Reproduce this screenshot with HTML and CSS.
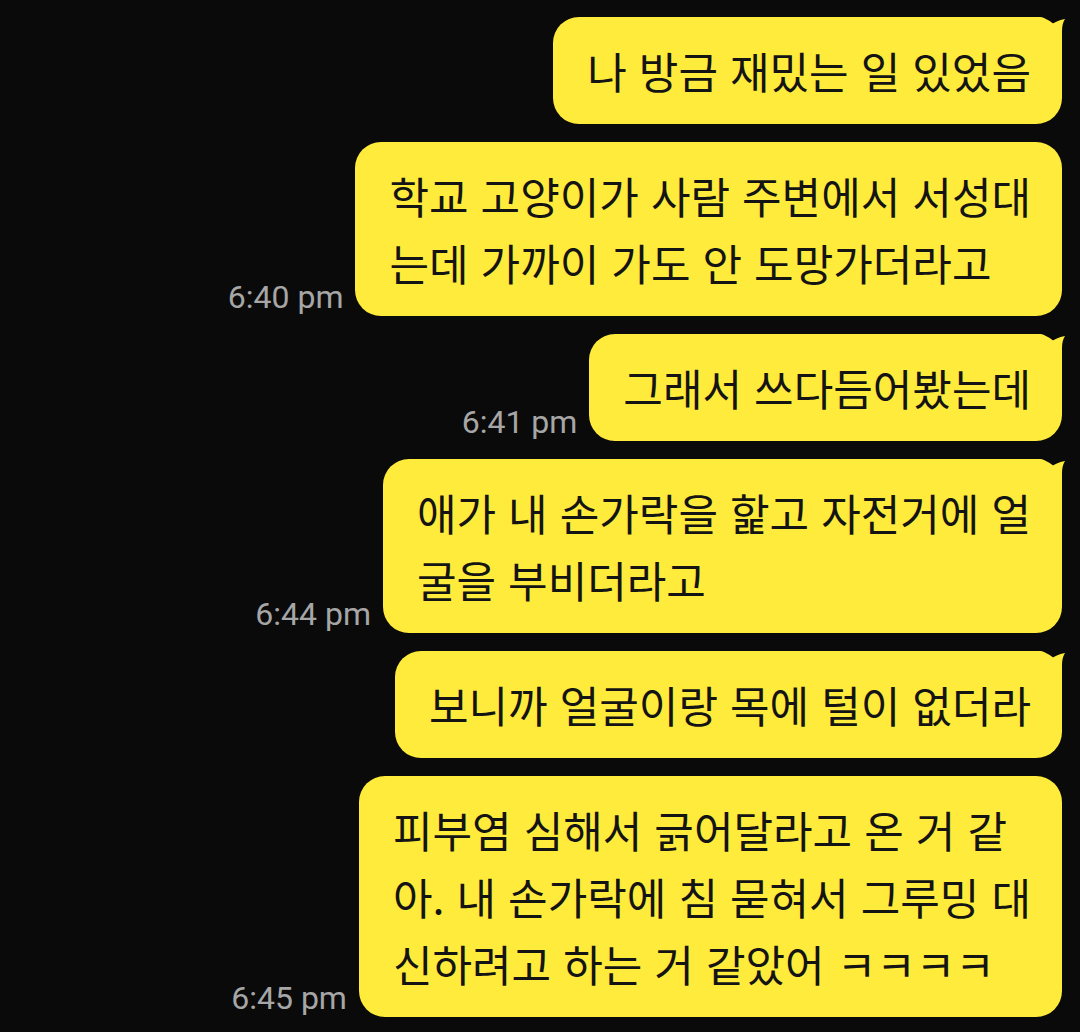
FILE: index.html
```html
<!DOCTYPE html>
<html lang="ko">
<head>
<meta charset="utf-8">
<link rel="stylesheet" href="styles.css">
</head>
<body>
<main class="chat">
  <div class="row">
    <div class="bubble tail">나 방금 재밌는 일 있었음<svg class="horn" viewBox="0 0 34 30" width="34" height="30"><path d="M0,0 L8,0 C13,0 16,4 17,9 C21,6 27,3 33,2 C31,5 30,9 30,14 L30,30 L0,30 Z"/></svg></div>
  </div>
  <div class="row">
    <span class="time">6:40 pm</span>
    <div class="bubble">학교 고양이가 사람 주변에서 서성대<br>는데 가까이 가도 안 도망가더라고</div>
  </div>
  <div class="row">
    <span class="time">6:41 pm</span>
    <div class="bubble tail">그래서 쓰다듬어봤는데<svg class="horn" viewBox="0 0 34 30" width="34" height="30"><path d="M0,0 L8,0 C13,0 16,4 17,9 C21,6 27,3 33,2 C31,5 30,9 30,14 L30,30 L0,30 Z"/></svg></div>
  </div>
  <div class="row">
    <span class="time">6:44 pm</span>
    <div class="bubble tail">애가 내 손가락을 핥고 자전거에 얼<br>굴을 부비더라고<svg class="horn" viewBox="0 0 34 30" width="34" height="30"><path d="M0,0 L8,0 C13,0 16,4 17,9 C21,6 27,3 33,2 C31,5 30,9 30,14 L30,30 L0,30 Z"/></svg></div>
  </div>
  <div class="row">
    <div class="bubble tail">보니까 얼굴이랑 목에 털이 없더라<svg class="horn" viewBox="0 0 34 30" width="34" height="30"><path d="M0,0 L8,0 C13,0 16,4 17,9 C21,6 27,3 33,2 C31,5 30,9 30,14 L30,30 L0,30 Z"/></svg></div>
  </div>
  <div class="row">
    <span class="time">6:45 pm</span>
    <div class="bubble">피부염 심해서 긁어달라고 온 거 같<br>아. 내 손가락에 침 묻혀서 그루밍 대<br>신하려고 하는 거 같았어 ㅋㅋㅋㅋ</div>
  </div>
</main>
</body>
</html>
```
FILE: styles.css
```css
html, body {
  margin: 0;
  padding: 0;
  background: #0a0a0a;
}
body {
  width: 1080px;
  height: 1032px;
  overflow: hidden;
}
.chat {
  display: flex;
  flex-direction: column;
  gap: 18px;
  padding: 17px 18px 0 0;
}
.row {
  display: flex;
  justify-content: flex-end;
  align-items: flex-end;
  gap: 12px;
}
.bubble {
  position: relative;
  background: #ffeb3b;
  color: #141414;
  font-family: "Noto Sans CJK KR", "Noto Sans", sans-serif;
  font-size: 43px;
  font-weight: 400;
  line-height: 67px;
  padding: 20px 31px 20px 34px;
  border-radius: 26px;
  white-space: nowrap;
}
.horn {
  position: absolute;
  top: 0;
  right: -4px;
  display: block;
  fill: #ffeb3b;
}
.time {
  font-family: Roboto, "Liberation Sans", sans-serif;
  font-size: 32px;
  line-height: 37px;
  color: #a6a6a6;
}
```
